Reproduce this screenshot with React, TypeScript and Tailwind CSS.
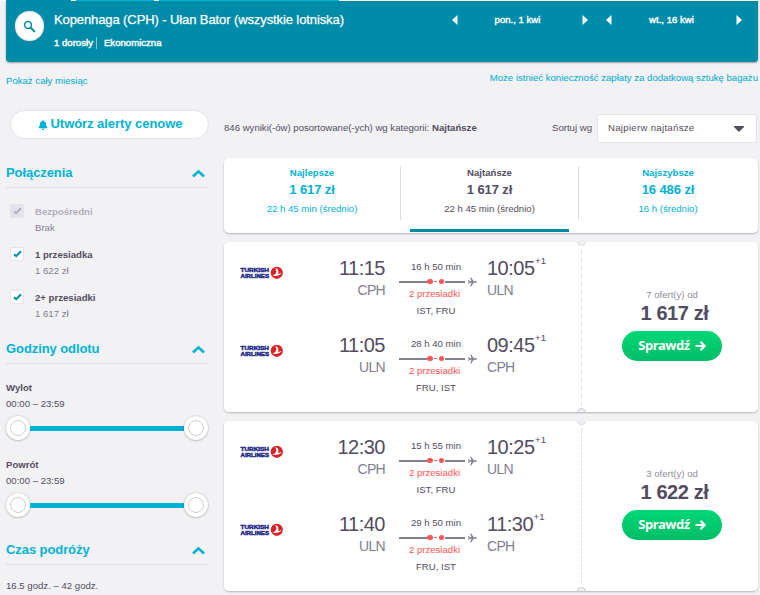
import { FaBell } from "react-icons/fa";

const FONT = "font-['Liberation_Sans',Arial,sans-serif]";

const stops = [
    { name: "Bezpośredni", price: "Brak", disabled: true },
    { name: "1 przesiadka", price: "1 622 zł", disabled: false },
    { name: "2+ przesiadki", price: "1 617 zł", disabled: false },
];

const tabs = [
    { name: "Najlepsze", price: "1 617 zł", time: "22 h 45 min (średnio)", active: false },
    { name: "Najtańsze", price: "1 617 zł", time: "22 h 45 min (średnio)", active: true },
    { name: "Najszybsze", price: "16 486 zł", time: "16 h (średnio)", active: false },
];

type Leg = {
    depart: string;
    from: string;
    duration: string;
    via: string;
    arrive: string;
    to: string;
};

type Ticket = { offers: number; price: string; legs: Leg[] };

const tickets: Ticket[] = [
    {
        offers: 7,
        price: "1 617 zł",
        legs: [
            { depart: "11:15", from: "CPH", duration: "16 h 50 min", via: "IST, FRU", arrive: "10:05", to: "ULN" },
            { depart: "11:05", from: "ULN", duration: "28 h 40 min", via: "FRU, IST", arrive: "09:45", to: "CPH" },
        ],
    },
    {
        offers: 3,
        price: "1 622 zł",
        legs: [
            { depart: "12:30", from: "CPH", duration: "15 h 55 min", via: "IST, FRU", arrive: "10:25", to: "ULN" },
            { depart: "11:40", from: "ULN", duration: "29 h 50 min", via: "FRU, IST", arrive: "11:30", to: "CPH" },
        ],
    },
];

const Triangle = ({ left = false }: { left?: boolean }) => (
    <svg width="6" height="10" viewBox="0 0 6 10" fill="#fff" className={left ? "rotate-180" : ""}>
        <path d="M0.5 0 L6 5 L0.5 10 Z" />
    </svg>
);

const DatePicker = ({ label }: { label: string }) => (
    <div className="flex h-5 w-[136px] items-center justify-between">
        <Triangle left />
        <span className="mr-[5px] text-[9.6px] [-webkit-text-stroke:0.4px_#fff]">{label}</span>
        <Triangle />
    </div>
);

const Header = () => (
    <header>
        <div className="flex h-px bg-white pl-1.5">
            <div className="w-[65px] bg-[#008ca8]" />
            <div className="ml-[5px] w-[78px] bg-[#00b2d6]" />
            <div className="ml-[5px] w-[180px] bg-[#00b2d6]" />
        </div>
        <div className="ml-1.5 flex h-[61px] w-[752px] rounded-b bg-[#008ca8] text-white shadow-[0_1px_2px_rgba(0,0,0,0.35)]">
            <div className="mt-2.5 ml-[9px] flex h-[30px] w-[29px] items-center justify-center rounded-full bg-white shadow-[inset_0_0_2px_#b5b5c5]">
                <svg width="13" height="13" viewBox="0 0 13 13" fill="none" stroke="#008ca8">
                    <circle cx="5" cy="5" r="3.4" strokeWidth="1.5" />
                    <path d="M7.7 7.7 L11.4 11.4" strokeWidth="2" strokeLinecap="round" />
                </svg>
            </div>
            <div className="ml-2.5 w-[390px] whitespace-nowrap">
                <h1 className="mt-[11px] h-4 text-[13px] leading-4 tracking-[-0.1px] [-webkit-text-stroke:0.25px_#fff]">
                    Kopenhaga (CPH) - Ułan Bator (wszystkie lotniska)
                </h1>
                <div className="mt-[9px] flex h-3 items-center text-[9.6px] [-webkit-text-stroke:0.4px_#fff]">
                    <span className="border-r border-[#80c5d3] pr-[3px] leading-3">1 dorosły</span>
                    <span className="ml-[7px]">Ekonomiczna</span>
                </div>
            </div>
            <div className="mt-[9px] ml-2 flex gap-[18px]">
                <DatePicker label="pon., 1 kwi" />
                <DatePicker label="wt., 16 kwi" />
            </div>
        </div>
    </header>
);

const FilterTitle = ({ children }: { children: string }) => (
    <div className="flex h-[23px] items-start justify-between border-b border-[#dddde3] pr-1">
        <h2 className="text-[13px] leading-4 font-bold tracking-[-0.08px] text-[#00b2d6]">{children}</h2>
        <svg width="13" height="9" viewBox="0 0 13 9" fill="none" stroke="#00b2d6" strokeWidth="2.6" className="mt-1">
            <path d="M1 7.5 L6.5 2.4 L12 7.5" />
        </svg>
    </div>
);

const Slider = ({ label }: { label: string }) => (
    <div className="h-[77px]">
        <div className="h-4 text-[9.6px] leading-4 font-bold">{label}</div>
        <div className="h-4 text-[9.6px] leading-4">00:00 – 23:59</div>
        <div className="flex h-8 w-[202px] items-center">
            <Knob />
            <div className="h-[5px] flex-1 bg-[#00b2d6]" />
            <Knob />
        </div>
    </div>
);

const Knob = () => (
    <div className="flex size-6 items-center justify-center rounded-full bg-white shadow-[0_0_2px_rgba(0,0,0,0.25),0_1px_2px_rgba(0,0,0,0.15)]">
        <div className="size-4 rounded-full border border-[#d0cfda]" />
    </div>
);

const Sidebar = () => (
    <aside className="w-[203px] shrink-0 whitespace-nowrap">
        <a className="mt-[13px] block h-3 text-[9.6px] leading-3 text-[#00a9cd]">Pokaż cały miesiąc</a>
        <button className="mt-[23px] ml-1 flex h-[29px] w-[199px] items-center justify-center gap-[3px] rounded-full border border-[#e4e3eb] bg-white pb-0.5 pl-px text-[13px] font-bold tracking-[-0.05px] text-[#00b2d6]">
            <FaBell className="mt-0.5 size-[10px]" />
            Utwórz alerty cenowe
        </button>
        <div className="mt-[26px]">
            <FilterTitle>Połączenia</FilterTitle>
        </div>
        <div className="mt-4 flex h-[130px] flex-col gap-[11px]">
            {stops.map((s) => (
                <div key={s.name} className="flex h-8 gap-[11px] pl-1">
                    <div
                        className={`flex size-[14px] items-center justify-center rounded-[2px] border border-[#e4e3eb] ${s.disabled ? "bg-[#e4e3eb]" : "bg-white"}`}
                    >
                        <svg width="9" height="8" viewBox="0 0 9 8" fill="none" stroke={s.disabled ? "#b2aebd" : "#008ca8"} strokeWidth="2">
                            <path d="M1 4.2 L3.2 6.2 L8 1.2" />
                        </svg>
                    </div>
                    <div className="text-[9.6px] leading-4">
                        <div className={`font-bold ${s.disabled ? "text-[#b2aebd]" : "text-[#524c61]"}`}>{s.name}</div>
                        <div className="text-[#817e8f]">{s.price}</div>
                    </div>
                </div>
            ))}
        </div>
        <div className="mt-[7px]">
            <FilterTitle>Godziny odlotu</FilterTitle>
        </div>
        <div className="mt-4 h-[162px]">
            <Slider label="Wylot" />
            <Slider label="Powrót" />
        </div>
        <FilterTitle>Czas podróży</FilterTitle>
        <div className="mt-[13px] text-[9.6px] leading-4">16.5 godz. – 42 godz.</div>
    </aside>
);

const TurkishLogo = () => (
    <svg width="44" height="14" viewBox="0 0 44 14">
        <g fill="#232c87" stroke="#232c87" strokeWidth="0.5" fontFamily="Liberation Sans" fontWeight="bold" fontSize="6">
            <text x="0.5" y="6.2" textLength="28.5" lengthAdjust="spacingAndGlyphs">TURKISH</text>
            <text x="0.5" y="11.8" textLength="28.5" lengthAdjust="spacingAndGlyphs">AIRLINES</text>
        </g>
        <circle cx="36.8" cy="6.8" r="6.1" fill="#dd1f26" />
        <path d="M35 2 C37.8 2.6 39.4 5 38 8 C39.3 8.1 40.6 7.6 41.6 6.6 C40.6 9.6 36.8 10.6 32.2 9.4 C36.2 8.6 37.6 5.6 35 2Z" fill="#fff" />
    </svg>
);

const Plane = () => (
    <svg width="9" height="10" viewBox="0 0 9 10" fill="#817e8f">
        <path d="M9 5 C9 4.4 8.5 4.3 8 4.3 H5.7 L3.2 0.4 H2.3 L3.5 4.3 H1.6 L0.8 3 H0.1 L0.6 5 L0.1 7 H0.8 L1.6 5.7 H3.5 L2.3 9.6 H3.2 L5.7 5.7 H8 C8.5 5.7 9 5.6 9 5Z" />
    </svg>
);

const FlightLeg = ({ leg }: { leg: Leg }) => (
    <div className="group flex h-[77px]">
        <div className="flex h-[32px] w-[60px] items-center group-last:h-[34px]">
            <TurkishLogo />
        </div>
        <div className="w-[85px] text-right">
            <div className="h-[22px] text-[20px] leading-[22px] tracking-[-0.5px]">{leg.depart}</div>
            <div className="h-[22px] text-[14px] leading-[22px] tracking-[-0.7px] text-[#817e8f]">{leg.from}</div>
        </div>
        <div className="ml-[14px] w-[78px] text-[9.6px] whitespace-nowrap">
            <div className="mt-[1px] h-[17px] w-[74px] text-center leading-[17px]">{leg.duration}</div>
            <div className="flex h-[13px] items-center">
                <div className="h-0.5 w-7 bg-[#817e8f]" />
                <div className="ml-[0.5px] size-[5.5px] rounded-full bg-[#ff5452]" />
                <div className="mx-[1.5px] h-px w-[3px] bg-[#817e8f]" />
                <div className="size-[5.5px] rounded-full bg-[#ff5452]" />
                <div className="mr-[3px] ml-px h-0.5 w-5 bg-[#817e8f]" />
                <Plane />
            </div>
            <div className="h-[15px] w-[71px] text-center leading-[11px] text-[#ff5452]">2 przesiadki</div>
            <div className="h-4 w-[74px] text-center leading-4">{leg.via}</div>
        </div>
        <div className="ml-2.5">
            <div className="flex h-[22px] text-[20px] leading-[22px] tracking-[-0.5px]">
                {leg.arrive}
                <sup className="-top-px ml-[0.5px] text-[9.6px] leading-[10px] tracking-normal">+1</sup>
            </div>
            <div className="h-[22px] text-[14px] leading-[22px] tracking-[-0.7px] text-[#817e8f]">{leg.to}</div>
        </div>
    </div>
);

const TicketCard = ({ ticket }: { ticket: Ticket }) => (
    <article className="relative flex h-[170px] overflow-hidden rounded-[5px] bg-white">
        <div className="w-[358px] pt-[15px] pl-4">
            {ticket.legs.map((leg) => (
                <FlightLeg key={leg.from} leg={leg} />
            ))}
        </div>
        <svg width="2" height="170" className="absolute left-[357px]">
            <path d="M0.5 7 V164" stroke="#e4e3eb" strokeWidth="1" strokeDasharray="6 2" />
        </svg>
        <div className="absolute -top-[5px] left-[353px] size-[9px] rounded-full border border-[#d5d5db] bg-[#f2f2f5]" />
        <div className="absolute -bottom-[5px] left-[353px] size-[9px] rounded-full border border-[#c8c8ce] bg-[#f2f2f5]" />
        <div className="flex flex-1 flex-col items-center pt-[45px] pl-1">
            <div className="h-4 text-[9.6px] leading-4 text-[#918e9c]">{ticket.offers} ofert(y) od</div>
            <div className="h-[22px] pl-[5px] text-[20px] leading-[21px] font-bold tracking-[-0.4px]">{ticket.price}</div>
            <button className="mt-[6px] flex h-[30px] w-[100px] items-center justify-center gap-[5px] rounded-full bg-linear-to-b from-[#00d775] to-[#00bd68] font-['Noto_Sans',sans-serif] text-[13px] font-bold tracking-[-0.4px] text-white">
                Sprawdź
                <svg width="11" height="10" viewBox="0 0 11 10" fill="none" stroke="#fff" strokeWidth="2.2">
                    <path d="M0.5 5 H9.5 M5.5 0.8 L9.6 5 L5.5 9.2" />
                </svg>
            </button>
        </div>
    </article>
);

const Results = () => (
    <main className="ml-[15px] w-[534px]">
        <p className="mt-[10px] h-3 text-right text-[9.6px] leading-3 whitespace-nowrap text-[#00a9cd]">
            Może istnieć konieczność zapłaty za dodatkową sztukę bagażu
        </p>
        <div className="mt-[30px] flex h-[29px] items-center text-[9.6px] whitespace-nowrap">
            <p>
                846 wyniki(-ów) posortowane(-ych) wg kategorii: <b>Najtańsze</b>
            </p>
            <span className="mr-[5px] ml-auto">Sortuj wg</span>
            <div className="mr-px flex h-[29px] w-[160px] items-center justify-between rounded-[2px] border border-[#e4e3eb] bg-white pr-3 pl-2.5">
                <span className="tracking-[0.3px]">Najpierw najtańsze</span>
                <svg width="10" height="6" viewBox="0 0 10 6" fill="#524c61">
                    <path d="M0 0 H10 V1 L5 6 L0 1 Z" />
                </svg>
            </div>
        </div>
        <div className="mt-[15px] flex h-[75px] rounded-[5px] bg-white text-center shadow-[0_1px_2px_rgba(0,0,0,0.25)]">
            {tabs.map((t, i) => (
                <div
                    key={t.name}
                    className={`flex flex-col items-center ${i === 0 ? "w-[177px]" : "w-[178px]"} ${t.active ? "text-[#524c61]" : "text-[#00b2d6]"}`}
                >
                    <div className={`mt-2 h-[54px] w-full ${i < 2 ? "border-r border-[#dddde3]" : ""}`}>
                        <div className="h-[15px] text-[9.6px] leading-[14px] font-bold">{t.name}</div>
                        <div className="h-[18px] text-[13px] leading-[18px] font-bold tracking-[-0.1px]">{t.price}</div>
                        <div className="h-5 text-[9.6px] leading-5">{t.time}</div>
                    </div>
                    {t.active && <div className="mt-[9px] mr-px h-[3px] w-[159px] bg-[#008ca8]" />}
                </div>
            ))}
        </div>
        <div className="mt-[9px] flex flex-col gap-[9px]">
            {tickets.map((t) => (
                <div key={t.price} className="rounded-[5px] shadow-[0_1px_2px_rgba(0,0,0,0.25)]">
                    <TicketCard ticket={t} />
                </div>
            ))}
        </div>
    </main>
);

const App = () => {
    return (
        <div className={`h-[595px] w-[760px] overflow-hidden bg-[#f2f2f5] text-[#524c61] ${FONT}`}>
            <Header />
            <div className="flex pl-1.5">
                <Sidebar />
                <Results />
            </div>
        </div>
    );
};

export default App;
